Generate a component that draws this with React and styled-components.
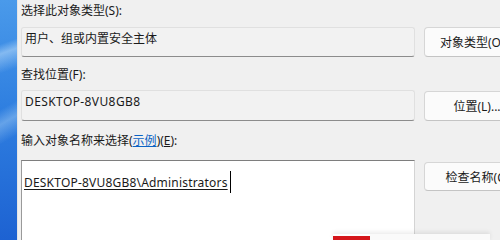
import React from 'react';
import styled, { createGlobalStyle } from 'styled-components';

const GlobalStyle = createGlobalStyle`
  html, body {
    margin: 0;
    padding: 0;
    width: 500px;
    height: 240px;
    overflow: hidden;
    background: #f0f0f0;
  }
  #root {
    height: 240px;
  }
`;

const Screen = styled.div`
  position: relative;
  display: flex;
  width: 500px;
  height: 240px;
  overflow: hidden;
  font-family: "Noto Sans", "Noto Sans CJK SC", sans-serif;
  font-size: 12px;
  color: #1a1a1a;
`;

const Wallpaper = styled.div`
  flex: 0 0 17px;
  background:
    linear-gradient(160deg, transparent 0 18%, rgba(190, 222, 250, 0.55) 22%, transparent 30%),
    linear-gradient(150deg, transparent 0 44%, rgba(170, 210, 245, 0.45) 50%, transparent 58%),
    linear-gradient(180deg, #4a9aea 0%, #2f7fe0 45%, #1d62d2 100%);
`;

const Dialog = styled.div`
  flex: 1;
  display: flex;
  flex-direction: column;
  padding: 3px 0 0 4px;
  background: #f0f0f0;
  box-shadow: inset 1px 0 0 #e4e4e4;
`;

const Field = styled.section`
  display: flex;
  flex-direction: column;
  margin-top: ${({ $top }) => $top || 0}px;
`;

const Label = styled.div`
  height: 16px;
  line-height: 16px;
  white-space: nowrap;
  margin-bottom: ${({ $gap }) => $gap}px;
`;

const Link = styled.span`
  color: #0b63c4;
  text-decoration: underline;
`;

const Key = styled.span`
  text-decoration: underline;
`;

const Row = styled.div`
  display: flex;
  align-items: flex-start;
  gap: 9px;
`;

const ReadBox = styled.div`
  flex: 0 0 394px;
  box-sizing: border-box;
  height: ${({ $h }) => $h}px;
  padding: 3px 0 0 3px;
  line-height: 16px;
  letter-spacing: ${({ $latin }) => ($latin ? '0.4px' : '0')};
  background: #f2f2f2;
  border: 1px solid #e0e0e0;
  border-bottom-color: #8c8c8c;
  border-radius: 3px;
  white-space: nowrap;
`;

const InputArea = styled.div`
  flex: 0 0 394px;
  box-sizing: border-box;
  height: 90px;
  padding: 10px 0 0 2px;
  line-height: 16px;
  letter-spacing: 0.2px;
  background: #ffffff;
  border: 1px solid #d4d4d4;
  border-top-color: #7e7e7e;
  border-left-color: #9a9a9a;
  white-space: nowrap;
`;

const Typed = styled.span`
  text-decoration: underline;
  text-underline-offset: 2px;
`;

const Caret = styled.span`
  display: inline-block;
  width: 0;
  height: 22px;
  margin-left: 2px;
  vertical-align: -6px;
  border-left: 1px solid #000;
`;

const Button = styled.div`
  flex: 0 0 106px;
  box-sizing: border-box;
  height: ${({ $h }) => $h}px;
  margin-top: ${({ $offset }) => $offset || 0}px;
  display: flex;
  align-items: center;
  justify-content: center;
  background: #fbfbfb;
  border: 1px solid #d6d6d6;
  border-bottom-color: #c4c4c4;
  border-radius: 4px;
  white-space: nowrap;
`;

const Popup = styled.div`
  position: absolute;
  left: 333px;
  top: 234px;
  display: flex;
  height: 8px;
  box-shadow: 0 -2px 4px rgba(0, 0, 0, 0.08);
`;

const PopupAccent = styled.div`
  width: 37px;
  margin-top: 2px;
  background: #d5161b;
`;

const PopupBody = styled.div`
  width: 120px;
  background: #fafafa;
`;

export default function App() {
  return (
    <Screen>
      <GlobalStyle />
      <Wallpaper />
      <Dialog>
        <Field>
          <Label $gap={8}>选择此对象类型(S):</Label>
          <Row>
            <ReadBox $h={30}>用户、组或内置安全主体</ReadBox>
            <Button $h={30}>对象类型(O)...</Button>
          </Row>
        </Field>
        <Field $top={10}>
          <Label $gap={7}>查找位置(F):</Label>
          <Row>
            <ReadBox $h={31} $latin>DESKTOP-8VU8GB8</ReadBox>
            <Button $h={30} $offset={1}>位置(L)...</Button>
          </Row>
        </Field>
        <Field $top={12}>
          <Label $gap={11}>
            输入对象名称来选择(<Link>示例</Link>)(<Key>E</Key>):
          </Label>
          <Row>
            <InputArea>
              <Typed>DESKTOP-8VU8GB8\Administrators</Typed>
              <Caret />
            </InputArea>
            <Button $h={29} $offset={2}>检查名称(C)</Button>
          </Row>
        </Field>
      </Dialog>
      <Popup>
        <PopupAccent />
        <PopupBody />
      </Popup>
    </Screen>
  );
}
